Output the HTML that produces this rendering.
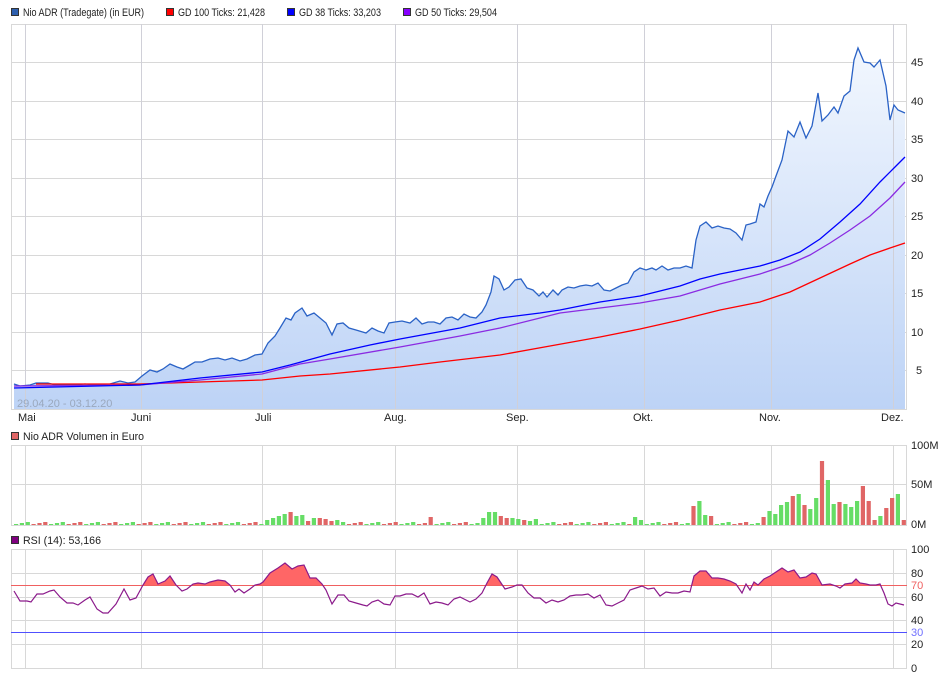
<!DOCTYPE html>
<html><head><meta charset="utf-8"><style>
html,body{margin:0;padding:0;background:#fff;width:939px;height:680px;overflow:hidden}
svg{display:block;font-family:"Liberation Sans",sans-serif}
</style></head><body>
<svg width="939" height="680" viewBox="0 0 939 680" xmlns="http://www.w3.org/2000/svg">
<defs>
<linearGradient id="g" x1="0" y1="48" x2="0" y2="409" gradientUnits="userSpaceOnUse">
<stop offset="0" stop-color="#f2f7fe"/><stop offset="1" stop-color="#bdd3f6"/></linearGradient>
<clipPath id="above"><rect x="11" y="549" width="896" height="36"/></clipPath>
</defs>
<g font-size="11" fill="#222">
<rect x="11.5" y="8.5" width="7" height="7" fill="#2d5fae" stroke="#333"/><text x="23" y="16" textLength="121" lengthAdjust="spacingAndGlyphs">Nio ADR (Tradegate) (in EUR)</text>
<rect x="166.5" y="8.5" width="7" height="7" fill="#f00" stroke="#333"/><text x="178" y="16" textLength="87" lengthAdjust="spacingAndGlyphs">GD 100 Ticks: 21,428</text>
<rect x="287.5" y="8.5" width="7" height="7" fill="#00f" stroke="#333"/><text x="299" y="16" textLength="82" lengthAdjust="spacingAndGlyphs">GD 38 Ticks: 33,203</text>
<rect x="403.5" y="8.5" width="7" height="7" fill="#80f" stroke="#333"/><text x="415" y="16" textLength="82" lengthAdjust="spacingAndGlyphs">GD 50 Ticks: 29,504</text>
</g>
<g stroke="#d8d8d8" stroke-width="1" fill="none">
<rect x="11.5" y="24.5" width="895" height="385"/>
<path d="M11 62.5H907M11 101.5H907M11 139.5H907M11 178.5H907M11 216.5H907M11 255.5H907M11 293.5H907M11 332.5H907M11 370.5H907"/>
</g>
<path fill="url(#g)" d="M14,409 L14,384 20,386 30,385 36,383 48,383 55,385 65,385 75,385 85,384 95,385 110,384 120,381 128,383 135,382 142,376 150,370 157,372 163,369 170,364 177,367 183,369 190,365 195,362 202,362 210,359 218,358 225,360 232,358 240,361 247,359 255,355 262,354 268,343 275,336 280,328 286,318 291,320 295,313 302,308 307,316 314,313 320,318 326,323 332,335 337,324 343,323 349,328 356,330 366,333 372,328 378,331 384,333 389,323 395,322 402,321 410,323 416,318 422,324 428,322 434,322 440,324 446,318 452,317 458,320 464,314 470,317 476,318 482,312 486,305 491,292 494,276 499,279 504,290 509,287 515,280 521,279 527,288 533,290 539,296 543,292 547,297 553,290 558,295 562,290 568,287 574,288 580,286 586,285 592,286 598,283 604,290 610,291 616,288 622,285 628,283 634,272 640,268 646,270 652,268 656,270 662,266 668,270 674,268 680,268 686,266 692,268 696,240 700,226 706,222 712,228 718,226 724,228 730,229 736,233 742,240 746,225 750,224 756,222 760,204 764,207 768,196 772,187 776,176 782,160 788,131 794,137 800,122 806,138 812,126 818,93 822,121 828,115 834,107 838,113 844,96 850,91 854,60 858,48 864,62 870,63 874,67 880,60 886,86 890,120 894,105 898,110 905,113 L905,409Z"/>
<g stroke="#d0d0d8" stroke-width="1"><path d="M25.5 24V409M141.5 24V409M262.5 24V409M395.5 24V409M517.5 24V409M644.5 24V409M771.5 24V409M893.5 24V409"/></g>
<polyline fill="none" stroke="#2a62c6" stroke-width="1.3" points="14,384 20,386 30,385 36,383 48,383 55,385 65,385 75,385 85,384 95,385 110,384 120,381 128,383 135,382 142,376 150,370 157,372 163,369 170,364 177,367 183,369 190,365 195,362 202,362 210,359 218,358 225,360 232,358 240,361 247,359 255,355 262,354 268,343 275,336 280,328 286,318 291,320 295,313 302,308 307,316 314,313 320,318 326,323 332,335 337,324 343,323 349,328 356,330 366,333 372,328 378,331 384,333 389,323 395,322 402,321 410,323 416,318 422,324 428,322 434,322 440,324 446,318 452,317 458,320 464,314 470,317 476,318 482,312 486,305 491,292 494,276 499,279 504,290 509,287 515,280 521,279 527,288 533,290 539,296 543,292 547,297 553,290 558,295 562,290 568,287 574,288 580,286 586,285 592,286 598,283 604,290 610,291 616,288 622,285 628,283 634,272 640,268 646,270 652,268 656,270 662,266 668,270 674,268 680,268 686,266 692,268 696,240 700,226 706,222 712,228 718,226 724,228 730,229 736,233 742,240 746,225 750,224 756,222 760,204 764,207 768,196 772,187 776,176 782,160 788,131 794,137 800,122 806,138 812,126 818,93 822,121 828,115 834,107 838,113 844,96 850,91 854,60 858,48 864,62 870,63 874,67 880,60 886,86 890,120 894,105 898,110 905,113"/>
<polyline fill="none" stroke="#f00" stroke-width="1.3" points="36,384 140,384 200,382 262,380 300,376 330,374 400,367 440,362 500,355 550,346 600,337 640,329 680,320 720,310 760,302 790,292 820,278 850,264 870,255 890,248 905,243"/>
<polyline fill="none" stroke="#8a2be2" stroke-width="1.3" points="14,386 140,385 200,380 262,374 300,364 330,359 400,347 460,336 500,328 540,318 560,313 600,308 640,303 680,296 720,284 760,274 790,264 810,255 830,243 850,230 870,216 890,198 905,182"/>
<polyline fill="none" stroke="#00f" stroke-width="1.3" points="14,388 140,385 200,378 262,372 290,365 330,354 370,345 400,339 460,328 500,318 540,313 560,310 600,302 640,296 680,286 700,279 720,274 760,266 780,260 800,252 820,239 840,222 860,204 880,182 895,167 905,157"/>
<text x="17" y="407" font-size="11" fill="#9aa8bd">29.04.20 - 03.12.20</text>
<g font-size="11" fill="#222">
<text x="18" y="421">Mai</text><text x="131" y="421">Juni</text><text x="255" y="421">Juli</text><text x="384" y="421">Aug.</text><text x="506" y="421">Sep.</text><text x="633" y="421">Okt.</text><text x="759" y="421">Nov.</text><text x="881" y="421">Dez.</text>
<text x="911" y="66">45</text><text x="911" y="105">40</text><text x="911" y="143">35</text><text x="911" y="182">30</text><text x="911" y="220">25</text><text x="911" y="259">20</text><text x="911" y="297">15</text><text x="911" y="336">10</text><text x="916" y="374">5</text>
</g>
<rect x="11.5" y="432.5" width="7" height="7" fill="#e06666" stroke="#333"/>
<text x="23" y="440" font-size="11" fill="#222" textLength="121" lengthAdjust="spacingAndGlyphs">Nio ADR Volumen in Euro</text>
<g stroke="#d8d8d8" fill="none"><rect x="11.5" y="445.5" width="895" height="80"/><path d="M11 484.5H907"/>
<path d="M25.5 445V525M141.5 445V525M262.5 445V525M395.5 445V525M517.5 445V525M644.5 445V525M771.5 445V525M893.5 445V525"/></g>
<g id="vol"></g>
<g font-size="11" fill="#222"><text x="911" y="449">100M</text><text x="911" y="488">50M</text><text x="911" y="528">0M</text></g>
<rect x="11.5" y="536.5" width="7" height="7" fill="#800080" stroke="#333"/>
<text x="23" y="544" font-size="11" fill="#222" textLength="78" lengthAdjust="spacingAndGlyphs">RSI (14): 53,166</text>
<g stroke="#d8d8d8" fill="none"><rect x="11.5" y="549.5" width="895" height="119"/>
<path d="M11 573.5H907M11 597.5H907M11 620.5H907M11 644.5H907"/>
<path d="M25.5 549V668M141.5 549V668M262.5 549V668M395.5 549V668M517.5 549V668M644.5 549V668M771.5 549V668M893.5 549V668"/></g>
<polygon clip-path="url(#above)" fill="#ff6666" points="14,591 20,601 27,601 31,602 37,594 43,594 50,591 54,590 60,597 67,603 73,603 78,605 85,600 90,597 97,609 103,613 108,613 116,604 124,589 130,600 136,598 143,585 148,577 153,574 158,584 165,581 170,576 176,585 182,591 187,589 193,584 198,583 205,584 210,582 218,580 225,581 230,585 235,592 239,589 244,593 250,589 255,585 260,584 263,582 270,573 278,568 285,563 292,569 298,566 304,565 310,578 316,578 322,584 326,590 332,604 338,595 344,595 349,601 356,603 363,605 367,606 372,602 378,600 384,604 390,605 395,596 400,596 406,594 412,594 418,597 424,593 430,604 436,602 442,603 448,605 454,599 460,597 466,600 470,602 476,599 482,593 487,583 492,574 497,577 505,589 512,587 517,585 522,585 528,593 534,598 540,598 546,603 552,600 558,602 564,600 570,596 576,595 582,595 588,594 594,598 600,595 606,605 612,606 618,603 624,600 630,590 636,588 642,586 648,589 654,588 660,596 666,592 672,593 678,593 684,591 690,592 694,576 700,571 706,571 712,578 718,578 724,579 730,581 736,584 742,593 746,584 750,590 754,582 758,585 764,579 770,576 776,572 782,568 788,572 794,570 800,578 806,577 812,573 816,574 822,585 830,584 836,586 840,588 845,584 852,583 856,579 860,583 866,584 870,585 876,585 880,584 884,593 888,604 892,606 896,603 904,605 904,585 14,585"/>
<path d="M11 585.5H907" stroke="#f06060"/>
<path d="M11 632.5H907" stroke="#5050ff"/>
<polyline fill="none" stroke="#8b1a8b" stroke-width="1.2" points="14,591 20,601 27,601 31,602 37,594 43,594 50,591 54,590 60,597 67,603 73,603 78,605 85,600 90,597 97,609 103,613 108,613 116,604 124,589 130,600 136,598 143,585 148,577 153,574 158,584 165,581 170,576 176,585 182,591 187,589 193,584 198,583 205,584 210,582 218,580 225,581 230,585 235,592 239,589 244,593 250,589 255,585 260,584 263,582 270,573 278,568 285,563 292,569 298,566 304,565 310,578 316,578 322,584 326,590 332,604 338,595 344,595 349,601 356,603 363,605 367,606 372,602 378,600 384,604 390,605 395,596 400,596 406,594 412,594 418,597 424,593 430,604 436,602 442,603 448,605 454,599 460,597 466,600 470,602 476,599 482,593 487,583 492,574 497,577 505,589 512,587 517,585 522,585 528,593 534,598 540,598 546,603 552,600 558,602 564,600 570,596 576,595 582,595 588,594 594,598 600,595 606,605 612,606 618,603 624,600 630,590 636,588 642,586 648,589 654,588 660,596 666,592 672,593 678,593 684,591 690,592 694,576 700,571 706,571 712,578 718,578 724,579 730,581 736,584 742,593 746,584 750,590 754,582 758,585 764,579 770,576 776,572 782,568 788,572 794,570 800,578 806,577 812,573 816,574 822,585 830,584 836,586 840,588 845,584 852,583 856,579 860,583 866,584 870,585 876,585 880,584 884,593 888,604 892,606 896,603 904,605"/>
<g font-size="11" fill="#222"><text x="911" y="553">100</text><text x="911" y="577">80</text><text x="911" y="589" fill="#f06060">70</text><text x="911" y="601">60</text><text x="911" y="624">40</text><text x="911" y="636" fill="#7070ff">30</text><text x="911" y="648">20</text><text x="911" y="672">0</text></g>
</svg>
<script>
(function(){
var g=document.getElementById('vol');var ns='http://www.w3.org/2000/svg';
var G='#66dd66',R='#e06666';
var big=[[267,5,G],[273,7,G],[279,9,G],[285,11,G],[290,13,R],[297,9,G],[303,10,G],[308,4,R],[314,7,G],[320,7,R],[325,6,R],[331,4,R],[337,5,G],[428,8,R],[486,7,G],[492,13,G],[498,9,R],[504,7,R],[510,7,G],[516,6,G],[522,5,R],[528,4,G],[534,6,G],[634,8,G],[640,5,G],[695,19,R],[700,24,G],[706,10,G],[711,9,R],[761,14,G],[766,8,R],[772,14,G],[777,11,G],[782,20,G],[787,23,G],[793,29,R],[799,31,G],[805,20,R],[810,16,G],[816,27,G],[822,64,R],[828,45,G],[834,21,G],[840,23,R],[845,21,G],[851,18,G],[856,24,G],[862,39,R],[867,24,R],[873,5,R],[879,9,G],[884,17,R],[890,27,R],[896,31,G],[903,5,R]];
for(var i=0;i<153;i++){var x=14+i*5.84;var h=1+((i*7)%3);var c=((i*5+(i%3))%2)?R:G;
for(var j=0;j<big.length;j++){if(Math.abs(big[j][0]-x-2)<3){h=big[j][1];c=big[j][2];}}
var r=document.createElementNS(ns,'rect');r.setAttribute('x',x.toFixed(1));r.setAttribute('y',525-h);r.setAttribute('width',4.2);r.setAttribute('height',h);r.setAttribute('fill',c);g.appendChild(r);}
})();
</script>
</body></html>
